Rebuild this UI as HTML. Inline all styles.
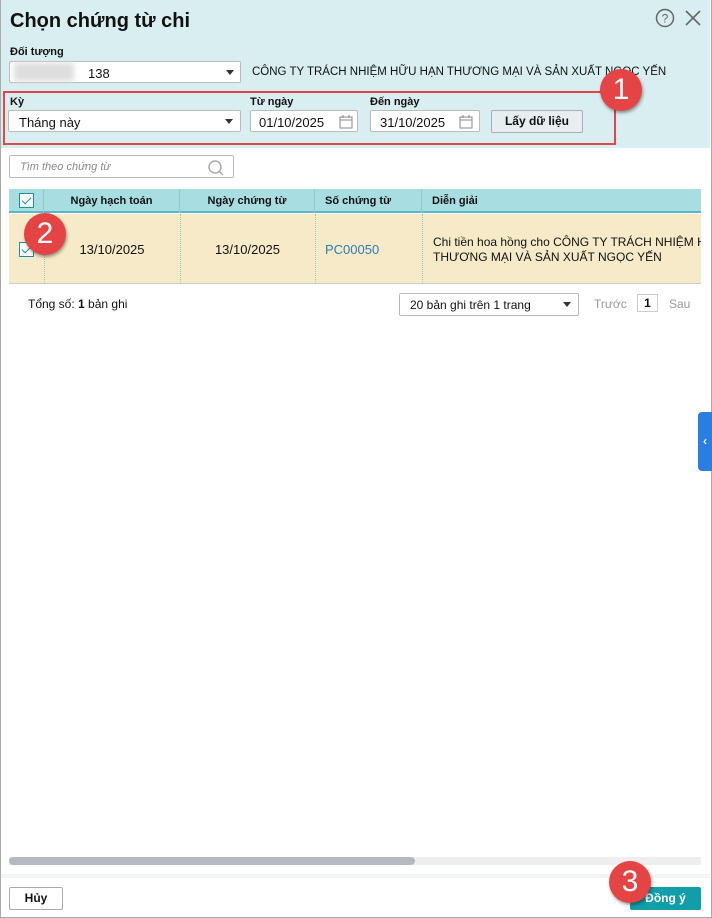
<!DOCTYPE html>
<html><head><meta charset="utf-8"><style>
*{box-sizing:border-box;margin:0;padding:0}
body{width:712px;height:918px;overflow:hidden;background:#fff;font-family:"Liberation Sans",Arial,sans-serif;font-size:13px;color:#111;position:relative}
.frame{position:absolute;left:0;top:0;width:712px;height:918px;border:1px solid #aaa;border-top:none}
.head{position:absolute;left:1px;top:0;width:709px;height:148px;background:#d9eef0}
.abs{position:absolute}
.lbl{font-size:11px;font-weight:bold}
.inp{position:absolute;background:#fff;border:1px solid #bbb;border-radius:2px;height:22px}
.arrow{position:absolute;width:0;height:0;border-left:4px solid transparent;border-right:4px solid transparent;border-top:5px solid #333}
.badge{position:absolute;width:42px;height:42px;border-radius:50%;background:#e54444;color:#fff;font-size:30px;text-align:center;line-height:42px;box-shadow:1px 2px 3px rgba(0,0,0,.4)}
.cb{position:absolute;width:15px;height:15px;border:1.5px solid #1d8fa3;background:#fff}
.cb:after{content:"";position:absolute;left:4px;top:1px;width:4px;height:8px;border:solid #1d8fa3;border-width:0 1px 1px 0;transform:rotate(45deg)}
.th{position:absolute;top:0;height:24px;line-height:24px;font-size:11px;font-weight:bold;border-right:1px solid #8ccbd0}
.vd{position:absolute;top:0;height:72px;border-left:1px dotted #8ccbd0}
</style></head><body>
<div class="head"></div>
<div class="frame"></div>
<div class="abs" style="left:10px;top:10px;font-size:20px;font-weight:bold">Chọn chứng từ chi</div>
<svg class="abs" style="left:655px;top:8px" width="20" height="20"><circle cx="10" cy="10" r="8.5" fill="none" stroke="#666" stroke-width="1.5"/><text x="10" y="14.5" font-size="12" text-anchor="middle" fill="#666" font-family="Liberation Sans">?</text></svg>
<svg class="abs" style="left:684px;top:9px" width="18" height="18"><path d="M2 2L16 16M16 2L2 16" stroke="#666" stroke-width="1.6"/></svg>
<div class="abs lbl" style="left:10px;top:46px">Đối tượng</div>
<div class="inp" style="left:9px;top:61px;width:232px"><div class="abs" style="left:4px;top:1px;width:60px;height:18px;background:#ddd;filter:blur(3px)"></div><span class="abs" style="left:78px;top:4px">138</span><div class="arrow" style="left:216px;top:8px"></div></div>
<div class="abs" style="left:252px;top:66px;font-size:11.5px">CÔNG TY TRÁCH NHIỆM HỮU HẠN THƯƠNG MẠI VÀ SẢN XUẤT NGỌC YẾN</div>
<div class="abs" style="left:3px;top:91px;width:613px;height:54px;border:2px solid #e04848"></div>
<div class="abs lbl" style="left:10px;top:96px">Kỳ</div>
<div class="inp" style="left:8px;top:110px;width:233px"><span class="abs" style="left:10px;top:4px">Tháng này</span><div class="arrow" style="left:216px;top:8px"></div></div>
<div class="abs lbl" style="left:250px;top:96px">Từ ngày</div>
<div class="inp" style="left:250px;top:110px;width:108px"><span class="abs" style="left:8px;top:4px">01/10/2025</span><svg class="abs" style="left:88px;top:3px" width="14" height="15"><rect x="1" y="3" width="12" height="11" fill="none" stroke="#888"/><path d="M1 6h12M4 1v3M10 1v3" stroke="#888"/></svg></div>
<div class="abs lbl" style="left:370px;top:96px">Đến ngày</div>
<div class="inp" style="left:370px;top:110px;width:110px"><span class="abs" style="left:9px;top:4px">31/10/2025</span><svg class="abs" style="left:88px;top:3px" width="14" height="15"><rect x="1" y="3" width="12" height="11" fill="none" stroke="#888"/><path d="M1 6h12M4 1v3M10 1v3" stroke="#888"/></svg></div>
<div class="abs" style="left:491px;top:110px;width:92px;height:23px;background:#e6eef0;border:1px solid #aab;border-radius:2px;text-align:center;line-height:21px;font-weight:bold;font-size:12px">Lấy dữ liệu</div>
<div class="badge" style="left:600px;top:69px">1</div>
<div class="inp" style="left:9px;top:155px;width:225px;height:23px"><span class="abs" style="left:10px;top:5px;font-style:italic;color:#888;font-size:11px">Tìm theo chứng từ</span><svg class="abs" style="left:197px;top:3px" width="18" height="18"><circle cx="8" cy="8" r="6" fill="none" stroke="#aaa" stroke-width="1.5"/><path d="M12.5 12.5L16 16" stroke="#aaa" stroke-width="1.5"/></svg></div>
<div class="abs" style="left:9px;top:189px;width:692px;height:95px;overflow:hidden">
<div class="abs" style="left:0;top:0;width:692px;height:24px;background:#a8dde2;border-bottom:2px solid #5bb7c0"></div>
<div class="th" style="left:0;width:35px"></div>
<div class="cb" style="left:10px;top:4px"></div>
<div class="th" style="left:35px;width:136px;text-align:center">Ngày hạch toán</div>
<div class="th" style="left:171px;width:135px;text-align:center">Ngày chứng từ</div>
<div class="th" style="left:306px;width:107px;padding-left:10px">Số chứng từ</div>
<div class="th" style="left:413px;width:279px;padding-left:10px;border:none">Diễn giải</div>
<div class="abs" style="left:0;top:25px;width:692px;height:70px;background:#f7eac8;border-bottom:1px solid #ccc">
<div class="vd" style="left:35px"></div><div class="vd" style="left:171px"></div><div class="vd" style="left:306px"></div><div class="vd" style="left:413px"></div>
<div class="cb" style="left:10px;top:28px"></div>
<div class="abs" style="left:35px;width:136px;top:28px;text-align:center">13/10/2025</div>
<div class="abs" style="left:171px;width:135px;top:28px;text-align:center">13/10/2025</div>
<div class="abs" style="left:316px;top:28px;color:#2a7fb8">PC00050</div>
<div class="abs" style="left:424px;top:21px;font-size:12px;line-height:15px;white-space:nowrap">Chi tiền hoa hồng cho CÔNG TY TRÁCH NHIỆM HỮU<br>THƯƠNG MẠI VÀ SẢN XUẤT NGỌC YẾN</div>
</div></div>
<div class="badge" style="left:24px;top:213px">2</div>
<div class="abs" style="left:28px;top:297px;font-size:12px">Tổng số: <b>1</b> bản ghi</div>
<div class="inp" style="left:399px;top:293px;width:180px;height:23px"><span class="abs" style="left:10px;top:4px;font-size:12px">20 bản ghi trên 1 trang</span><div class="arrow" style="left:163px;top:8px"></div></div>
<div class="abs" style="left:594px;top:297px;color:#999;font-size:12px">Trước</div>
<div class="abs" style="left:637px;top:294px;width:21px;height:18px;border:1px solid #ccc;text-align:center;line-height:16px;font-weight:bold;font-size:12px">1</div>
<div class="abs" style="left:669px;top:297px;color:#999;font-size:12px">Sau</div>
<div class="abs" style="left:698px;top:412px;width:14px;height:59px;background:#2a7de1;border-radius:4px 0 0 4px;color:#fff;font-size:12px;font-weight:bold;line-height:59px;text-align:center">‹</div>
<div class="abs" style="left:9px;top:857px;width:692px;height:8px;background:#eee"></div>
<div class="abs" style="left:9px;top:857px;width:406px;height:8px;background:#b5b9bf;border-radius:4px"></div>
<div class="abs" style="left:1px;top:874px;width:709px;height:4px;background:#f2f4f6"></div>
<div class="abs" style="left:9px;top:887px;width:54px;height:23px;border:1px solid #aaa;border-radius:2px;text-align:center;line-height:21px;font-weight:bold;font-size:12px">Hủy</div>
<div class="abs" style="left:630px;top:887px;width:71px;height:23px;background:#129ea8;border-radius:2px;color:#fff;text-align:center;line-height:23px;font-weight:bold;font-size:12px">Đồng ý</div>
<div class="badge" style="left:609px;top:861px">3</div>
</body></html>
